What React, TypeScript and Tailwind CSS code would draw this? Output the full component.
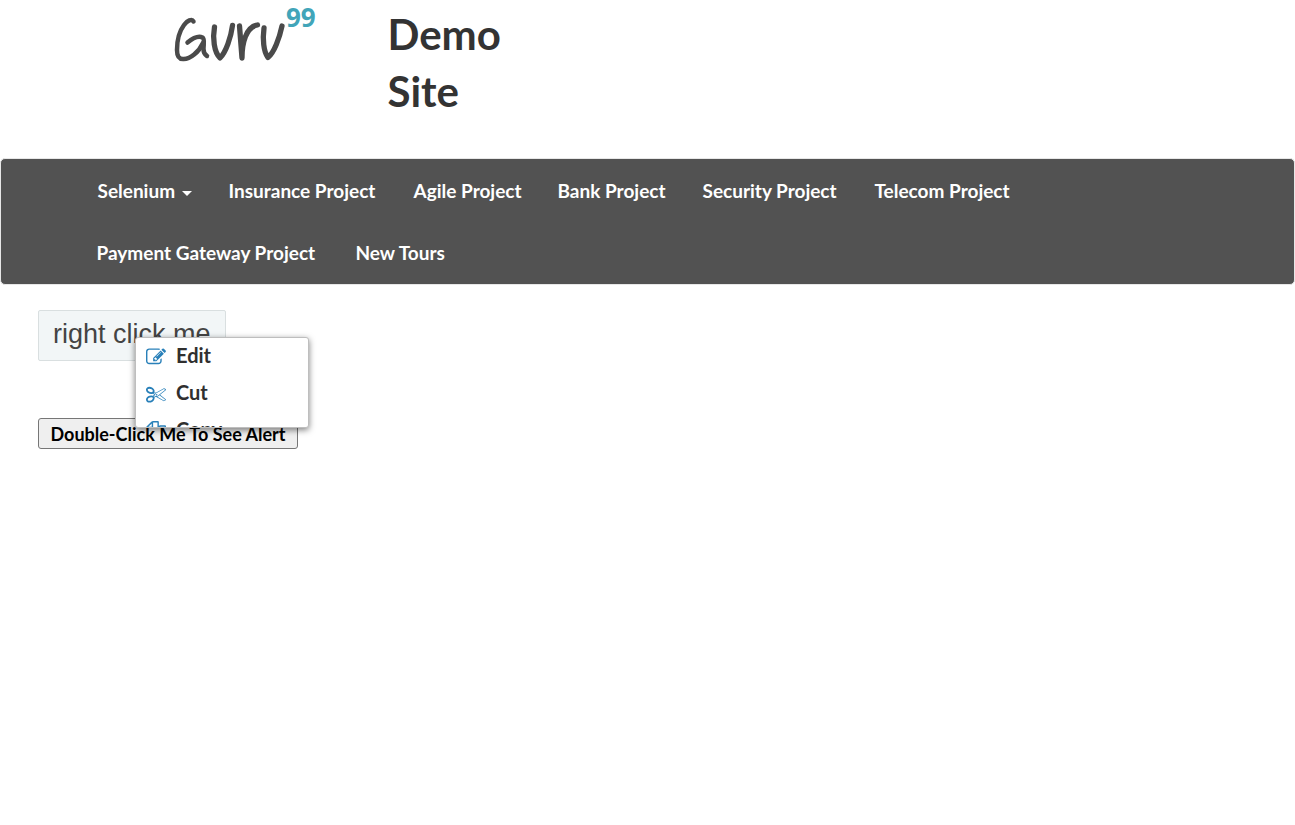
import React from "react";

const projects = [
  { label: "Insurance Project", width: "w-[185px]" },
  { label: "Agile Project", width: "w-[144px]" },
  { label: "Bank Project", width: "w-[145px]" },
  { label: "Security Project", width: "w-[172px]" },
  { label: "Telecom Project", width: "w-[173px]" },
  { label: "Payment Gateway Project", width: "w-[259px]" },
  { label: "New Tours", width: "w-[126px]" },
];

const menuItems = [
  {
    label: "Edit",
    path: "M888 1184l116-116-152-152-116 116v56h96v96h56zm440-720q-16-16-33 1l-350 350q-17 17-1 33t33-1l350-350q17-17 1-33zm80 594v190q0 119-84.5 203.5t-203.5 84.5h-832q-119 0-203.5-84.5t-84.5-203.5v-832q0-119 84.5-203.5t203.5-84.5h832q63 0 117 25 15 7 18 23 3 17-9 29l-49 49q-14 14-32 8-23-6-45-6h-832q-66 0-113 47t-47 113v832q0 66 47 113t113 47h832q66 0 113-47t47-113v-126q0-13 9-22l64-64q15-15 35-7t20 29zm-96-738l288 288-672 672h-288v-288zm444 132l-92 92-288-288 92-92q28-28 68-28t68 28l152 152q28 28 28 68t-28 68z",
  },
  {
    label: "Cut",
    path: "M960 896q26 0 45 19t19 45-19 45-45 19-45-19-19-45 19-45 45-19zm300 64l507 398q28 20 25 56-5 35-35 51l-128 64q-13 7-29 7-17 0-31-8l-690-387-110 66q-8 4-12 5 14 49 10 97-7 77-56 147.5t-132 123.5q-132 84-277 84-136 0-222-78-90-84-79-207 7-76 56-147t131-124q132-84 278-84 83 0 151 31 9-13 22-22l122-73-122-73q-13-9-22-22-68 31-151 31-146 0-278-84-82-53-131-124t-56-147q-5-59 15.5-113t63.5-93q85-79 222-79 145 0 277 84 83 52 132 123t56 148q4 48-10 97 4 1 12 5l110 66 690-387q14-8 31-8 16 0 29 7l128 64q30 16 35 51 3 36-25 56zm-681-260q46-42 21-108t-106-117q-92-59-192-59-74 0-113 36-46 42-21 108t106 117q92 59 192 59 74 0 113-36zm-85 745q81-51 106-117t-21-108q-39-36-113-36-100 0-192 59-81 51-106 117t21 108q39 36 113 36 100 0 192-59zm178-613l96 58v-11q0-36 33-56l14-8-79-44-26 26q-3 3-10 11t-12 12q-2 2-4 3.5t-3 2.5zm224 224l96 32 736-576-128-64-768 431v113l-160 96 9 8q2 2 7 6 4 4 11 12t11 12l26 26zm704 416l128-64-520-408-177 138q-2 3-13 7z",
  },
  {
    label: "Copy",
    path: "M1696 384q40 0 68 28t28 68v1216q0 40-28 68t-68 28h-960q-40 0-68-28t-28-68v-288h-544q-40 0-68-28t-28-68v-672q0-40 20-88t48-76l408-408q28-28 76-48t88-20h416q40 0 68 28t28 68v328q68-40 128-40h416zm-544 213l-299 299h299v-299zm-640-384l-299 299h299v-299zm196 647l316-316v-416h-384v416q0 40-28 68t-68 28h-416v640h512v-256q0-40 20-88t48-76zm956 804v-1152h-384v416q0 40-28 68t-68 28h-416v640h896z",
  },
];

function Logo() {
  return (
    <svg viewBox="0 0 150 70" className="h-[70px] w-[150px] overflow-visible" role="img" aria-label="Guru99">
      <g fill="none" stroke="#4a4a4a" strokeLinecap="round" strokeLinejoin="round">
        <path strokeWidth="4.500" d="M21.500 21.500C20 18.500 15 20.500 12 25C7.500 31 5 41 5 50C5 56 6.500 59 11 59C18 59.500 27 52 31 43" />
        <path strokeWidth="4.500" d="M15.500 42.500C21 38 27 36 30.500 37.500C33 39 31.500 44 31.500 49C31.500 53 32.500 54.500 35 56" />
        <path strokeWidth="5.300" d="M42.500 27C40.500 38 42 52 48 58C54 52 59 37 60.500 25.500" />
        <path strokeWidth="5.300" d="M67.500 26L70 58C70 43 74 27 85.500 25" />
        <path strokeWidth="5.300" d="M92 28C90.500 39 91.500 52 96 57.500C102 53 107.500 38 110 26" />
      </g>
      <text x="114" y="27" fill="#41a5b9" fontSize="26" fontWeight="700" fontFamily="Open Sans, sans-serif">99</text>
    </svg>
  );
}

export default function App() {
  return (
    <div className="font-['Lato',sans-serif] text-[#333]">
      <header className="mx-auto flex h-[158px] max-w-[1140px] items-start pl-[94px]">
        <a href="#home" className="mr-[66px] block">
          <Logo />
        </a>
        <h1 className="w-[120px] pt-[6px] text-[42px] leading-[57px] font-bold">Demo Site</h1>
      </header>

      <nav className="rounded-[5px] border border-[#e7e7e7] bg-[#525252] pt-px text-[19px] font-bold text-white">
        <ul className="mx-auto flex max-w-[1140px] flex-wrap">
          <li className="w-[132px]">
            <button type="button" className="flex h-[62px] w-full items-center pr-[18px] pl-5 whitespace-nowrap">
              Selenium
              <svg viewBox="0 0 10 5" className="mt-1 ml-auto h-[5px] w-[10px] fill-white" aria-hidden="true">
                <path d="M0 0h10L5 5z" />
              </svg>
            </button>
          </li>
          {projects.map((p) => (
            <li key={p.label} className={p.width}>
              <a href="#project" className="flex h-[62px] items-center pl-[19px] whitespace-nowrap">
                {p.label}
              </a>
            </li>
          ))}
        </ul>
      </nav>

      <main className="flex flex-col items-start px-[38px] pt-[25px]">
        <div className="relative mb-[57px]">
          <span className="block rounded-[2px] border border-[#d9dfe0] bg-[#f2f6f7] px-[14px] pt-[4px] pb-[7px] font-['Liberation_Sans',sans-serif] text-[27px] leading-[38px] text-[#444]">
            right click me
          </span>
          <ul className="absolute top-[27px] left-[97px] z-10 h-[91px] w-[174px] overflow-hidden rounded-[3px] border border-[#bebebe] bg-white shadow-[0_2px_6px_rgba(0,0,0,0.5)]">
            {menuItems.map((m) => (
              <li key={m.label}>
                <button type="button" className="flex h-[37px] w-full items-center gap-[10px] pl-[10px] text-xl font-bold text-[#2f2f2f]">
                  <svg viewBox="0 0 1792 1792" className="size-5 fill-[#2980b9]" aria-hidden="true">
                    <path d={m.path} />
                  </svg>
                  <span className="pb-[3px]">{m.label}</span>
                </button>
              </li>
            ))}
          </ul>
        </div>
        <button type="button" className="h-[31px] w-[260px] rounded-[3px] border border-[#767676] bg-[#efefef] text-lg leading-none font-bold whitespace-nowrap text-black">
          Double-Click Me To See Alert
        </button>
      </main>
    </div>
  );
}
